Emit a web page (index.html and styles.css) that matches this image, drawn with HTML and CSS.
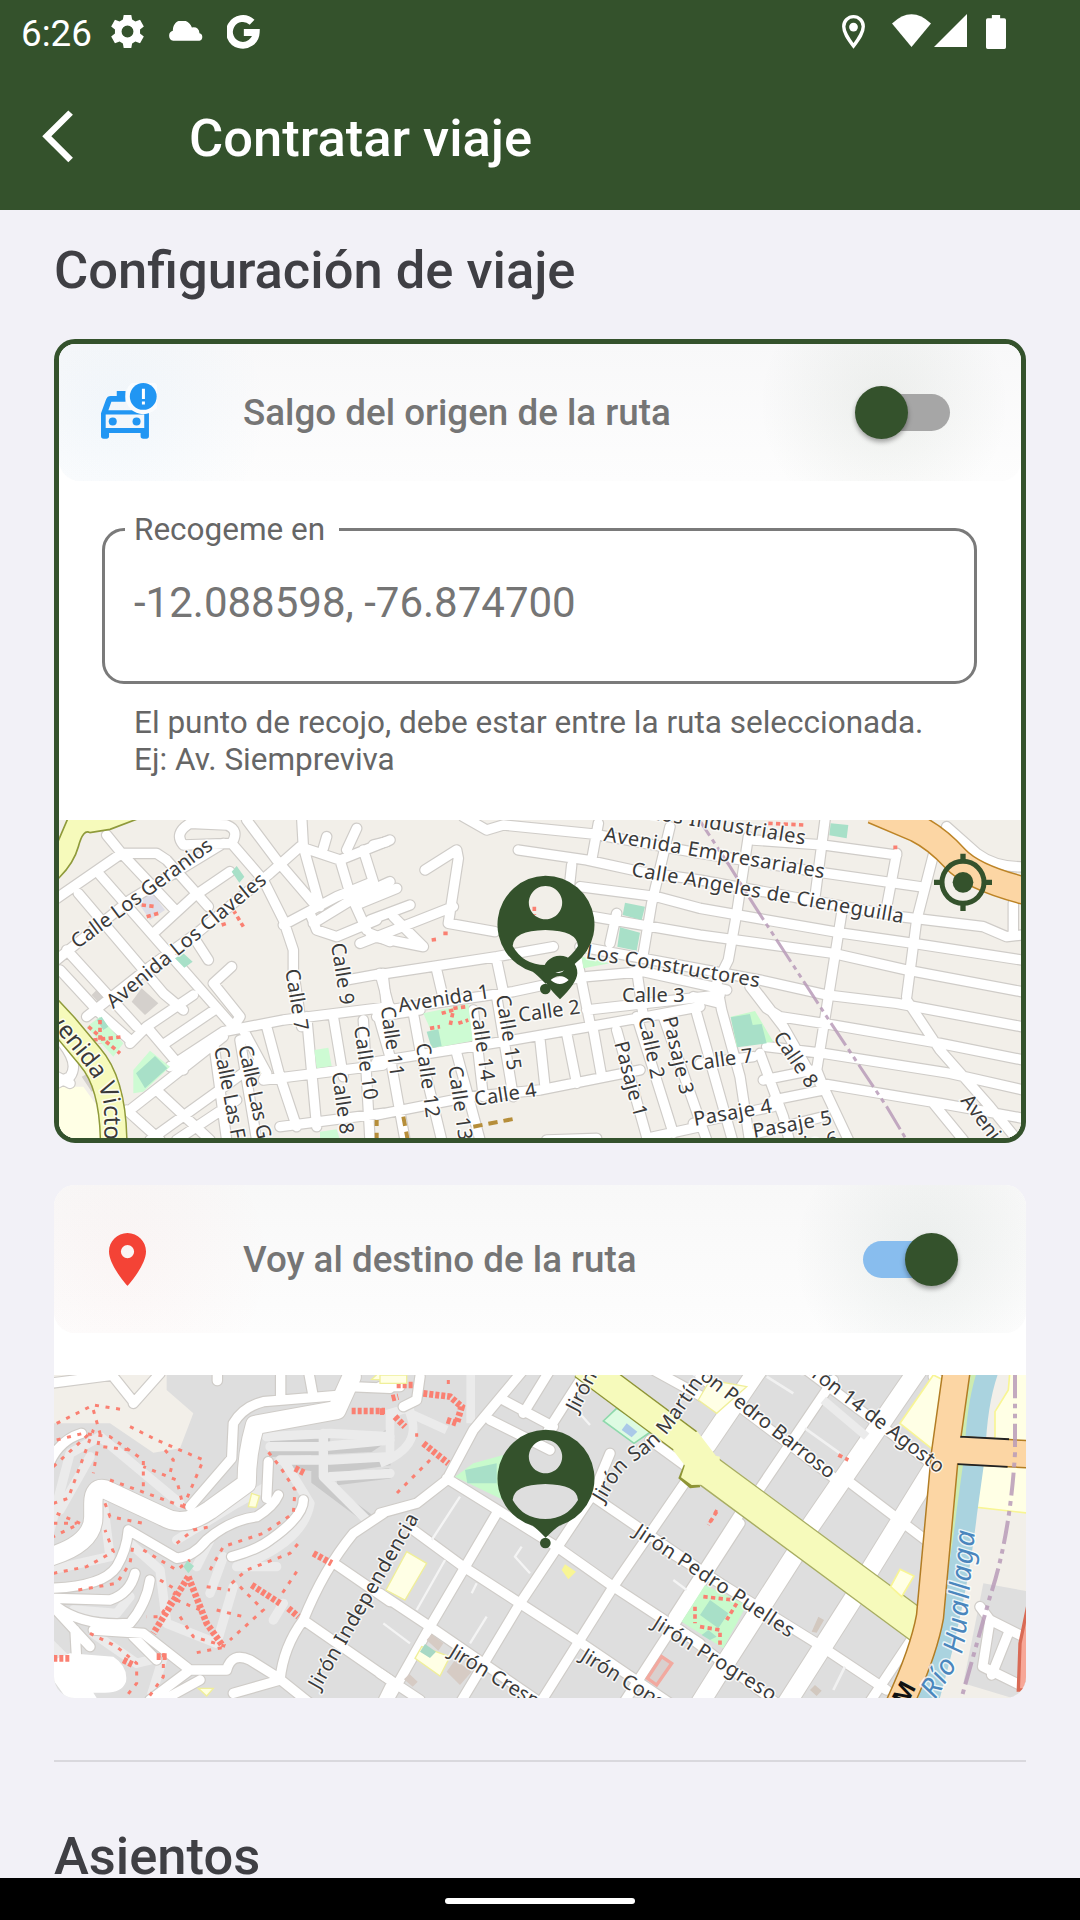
FILE: index.html
```html
<!DOCTYPE html>
<html lang="es">
<head>
<meta charset="utf-8">
<title>Contratar viaje</title>
<link rel="stylesheet" href="styles.css">
</head>
<body>
<div class="screen">
  <header class="top">
    <div class="status">
      <div class="status-left">
        <span class="clock">6:26</span>
        <svg class="gear" viewBox="2 2 20 20"><path fill-rule="evenodd" d="M19.600 13.200V10.800L21.900 8.900 19.600 4.900 16.800 6 14.800 4.800 14.300 2H9.700L9.200 4.800 7.200 6 4.400 4.900 2.100 8.900 4.400 10.800V13.200L2.100 15.100 4.400 19.100 7.200 18 9.200 19.200 9.700 22H14.300L14.800 19.200 16.800 18 19.600 19.100 21.900 15.100zM12 15.600A3.600 3.600 0 1 1 12 8.400a3.600 3.600 0 0 1 0 7.200z"/></svg>
        <svg class="cloud" viewBox="485 62 104 59" preserveAspectRatio="none"><path d="M500 120a15 15 0 0 1-1-29C499 52 544 51 554 81q20-3 22 17a11.500 11.500 0 0 1 0 22z"/></svg>
        <svg class="glogo" viewBox="657 45 96 99"><path fill="none" stroke="#fff" stroke-width="20" d="M730 66A39 39 0 1 0 742 96H706"/></svg>
      </div>
      <div class="status-right">
        <svg class="loc" viewBox="876 43 68 101"><path fill="none" stroke="#fff" stroke-width="10" d="M910 135C893 112 881 95 881 77a29 29 0 0 1 58 0C939 95 927 112 910 135z"/><circle cx="910" cy="79" r="13"/></svg>
        <svg class="wifi" viewBox="1021 42 114 98" preserveAspectRatio="none"><path d="M1078 140 1021 70Q1078 15 1135 70z"/></svg>
        <svg class="signal" viewBox="0 0 31 33" preserveAspectRatio="none"><path d="M31 0V33H0z"/></svg>
        <svg class="battery" viewBox="1295 42 58 102" preserveAspectRatio="none"><path d="M1312 42h24v10h12q5 0 5 5v82q0 5-5 5h-48q-5 0-5-5V57q0-5 5-5h12z"/></svg>
      </div>
    </div>
    <div class="appbar">
      <svg class="back" viewBox="120 330 94 160" preserveAspectRatio="none"><path fill="none" stroke="#fff" stroke-width="19" d="M204 338 134 409 204 481"/></svg>
      <h1>Contratar viaje</h1>
    </div>
  </header>

  <main>
    <h2>Configuración de viaje</h2>

    <section class="card card-origin">
      <div class="row row-origin">
        <div class="row-icon">
          <svg class="car" viewBox="184 160 167 167">
            <path fill="#2196f3" fill-rule="evenodd" d="M184 250 199 209Q203 199 213 199H231V184H257V216H215L206 241H327V318Q327 326 319 326H310Q302 326 302 318V309H208V318Q208 326 200 326H192Q184 326 184 318ZM198 254V294H313V254Z"/>
            <circle cx="219" cy="275" r="12" fill="#2196f3"/><circle cx="290" cy="275" r="12" fill="#2196f3"/>
            <circle cx="310" cy="200" r="53" fill="#fafcfe"/><circle cx="310" cy="200" r="40" fill="#2196f3"/>
            <path fill="#fff" d="M306 177h9v31h-9zM306 215h9v9h-9z"/>
          </svg>
        </div>
        <span class="row-title">Salgo del origen de la ruta</span>
        <div class="switch"><i class="thumb"></i></div>
      </div>
      <fieldset class="field">
        <legend>Recogeme en</legend>
        <div class="value">-12.088598, -76.874700</div>
      </fieldset>
      <p class="helper">El punto de recojo, debe estar entre la ruta seleccionada.<br>Ej: Av. Siempreviva</p>
      <svg class="map" viewBox="59 820 962 318" preserveAspectRatio="none">
        <defs>
          <g id="originRoads">
            <path transform="translate(50 810) scale(.33333)" d="M20 265 215 130M170 75 215 130H320L350 150 475 290M215 130 375 300M150 195 330 400 550 650M85 250 340 550 400 600M50 420 260 650M30 480 150 610 240 690M20 450 240 270 520 100M310 370 430 260 540 185M110 620 300 470 440 370 660 190 750 110M240 700 290 650 430 555M345 700 500 595M360 770 520 665 700 630 1020 590M290 650 400 780M430 380 475 450M545 470 490 520 570 620 550 650M400 105Q370 70 420 40L530 45Q570 60 545 100ZM545 100 640 210 700 330 730 420V480L755 650M590 30 680 150 800 290M755 20 760 110 810 290M750 110 870 150 1020 90M830 80 820 115M920 55 890 120M700 345 860 260 970 215 940 120M870 150 900 250 950 360M790 340 920 260 1020 215M780 310 800 360 860 380 980 330M960 370 1020 395M580 660 650 790 640 810 1000 765M650 650 690 800 740 950M770 620 800 950M850 620 880 800M690 950 1000 910M1000 500 1010 590M890 510 1000 490M240 900 520 680M230 900 330 990M330 850 480 990M300 990 620 760M380 990 560 870M20 800 60 820M30 690Q90 760 60 800L20 820M490 690 530 990M570 690 620 990M940 630 960 990"/>
            <path transform="translate(380 810) scale(.33333)" d="M250 20 320 60 370 45 640 72 960 130 1340 190 1620 230M415 120 620 150 780 185 960 210 1560 320 1810 350 1880 380 1925 375M600 230 830 260 960 295 1390 370 1600 400 1925 450M640 320 960 375 1360 430 1580 480 1925 545M600 410 1140 510 1340 555 1550 580 1925 650M135 180 230 120 235 145 205 340 345 365M-20 105 20 95M-60 280 50 235M-30 330 90 285M-60 400 220 290M40 320 130 410M-20 380 130 410M-10 495 350 440 520 410M-10 605 400 545 610 500M-10 755 400 690 800 620 960 590M-10 915 270 860 480 840 780 780M0 490 30 600M170 480 190 565M350 450 370 545M590 440 630 640M100 610 120 720 185 990M-10 600 30 740 75 990M230 730 300 990M280 600 310 860M350 560 400 860M480 690 495 830M560 670 590 820M640 660 665 800M710 660 800 980M770 480 790 620M770 620 880 970M850 620 980 990M950 610 1060 1000M620 500 790 485 1040 540M620 600 1020 555M800 985 960 950M655 40 635 150M575 165 565 260M870 50 815 280 790 430M710 310 690 400M-10 620 120 600M500 990 650 985"/>
            <path transform="translate(700 810) scale(.33333)" d="M160 90 370 105 590 135M145 80 110 310 85 450 50 520 65 600 120 800 150 1000M375 30 345 260M425 310 390 530 350 780 370 830 450 1000M590 130 560 290M700 135 650 330 620 560M620 570 720 720 870 890 960 1000M150 520 250 650 330 790M150 530 200 595 240 620 370 640 720 700 970 750M200 710 370 730 750 790 970 840M360 820 720 880 970 925M700 880 790 990M940 280V370M-20 560 60 580M180 730 250 920 270 1000M0 760 160 740M190 810 340 780M220 870 370 840M-20 940 220 890M150 975 370 920M740 50 830 130Q890 175 980 170"/>
          </g>
        </defs>
        <rect x="59" y="820" width="962" height="318" fill="#f2efe9"/>
        <g transform="translate(50 810) scale(.33333)">
          <path fill="#ffffe5" d="M20 830 100 830 150 900 150 990H20z"/>
          <path fill="#dedee8" d="M255 265 300 240 345 300 300 330z"/>
          <path fill="#d4d0cc" d="M245 575 275 535 325 580 285 615zM95 800 115 790 150 830 125 845zM125 555 145 535 165 560 148 580z"/>
        </g>
        <use href="#originRoads" class="casing"/>
        <use href="#originRoads" class="road"/>
        <g transform="translate(50 810) scale(.33333)">
          <path fill="#cdfbd3" d="M110 650 150 620 220 700 190 740zM250 850V780L300 722 360 770 280 845zM793 720 835 713 845 768 800 775zM810 965 860 958 870 990H810z"/>
          <path fill="#a8e0c8" d="M545 185 560 168 583 200 568 218zM375 445 400 430 428 455 403 473zM258 790 315 738 352 775 285 835zM140 630 155 620 175 650 160 660z"/>
          <path class="reds" d="M275 285 320 290M290 320 325 310M550 300 580 350M515 345 530 340M115 650 210 730M150 630V700M130 690 220 680"/>
          <path fill="#f6fabb" stroke="#8f9a3a" stroke-width="5" d="M15 215Q70 165 85 110T120 68L180 58 275 22H55L15 115z"/>
          <path class="yellowcase" stroke-width="84" d="M-30 570 45 650 120 740Q190 820 191 1000"/>
          <path class="yellow" stroke-width="75" d="M-30 570 45 650 120 740Q190 820 191 1000"/>
          <path fill="none" stroke="#b68e3a" stroke-width="12" stroke-dasharray="18 20" d="M980 930V1000"/>
        </g>
        <g transform="translate(380 810) scale(.33333)">
          <path fill="#cdfbd3" d="M130 610 265 582 278 692 175 712z"/>
          <path fill="#c8facc" d="M605 440 690 460 610 475z"/>
          <path fill="#a8e0c8" d="M735 278 795 290 785 330 728 315zM720 352 780 368 770 422 712 410zM140 665 175 658 185 708 155 715z"/>
          <path class="reds" d="M150 655 180 650M185 610 220 600 210 650M220 595 260 590M235 640 265 630M155 390 170 388M190 370H205M463 290V315"/>
          <path fill="none" stroke="#b68e3a" stroke-width="12" stroke-dasharray="28 18" d="M70 920 85 1000M280 950 410 925"/>
        </g>
        <g transform="translate(700 810) scale(.33333)">
          <path fill="#c8facc" d="M92 620 165 603 220 695 110 710z"/>
          <path fill="#a8e0c8" d="M92 622 150 612 158 645 185 642 200 700 112 712zM392 40 445 45 440 85 388 76z"/>
          <path class="reds" d="M205 40 310 45M580 112H592"/>
          <path fill="none" stroke="#bd8426" stroke-width="86" d="M520 0 650 55Q710 85 765 145T990 246"/>
          <path fill="none" stroke="#fcd6a4" stroke-width="77" d="M520 0 650 55Q710 85 765 145T990 246"/>
          <path fill="none" stroke="#b89bb8" stroke-width="9" stroke-dasharray="80 14 14 14 14 14" opacity=".85" d="M-15 10 90 170 165 290 380 620 560 890 620 990"/>
        </g>
        <g class="labels">
          <g transform="translate(50 810) scale(.33333)">
            <text transform="translate(82 418) rotate(-36.5)" textLength="510">Calle Los Geranios</text>
            <text transform="translate(190 598) rotate(-39.500)" textLength="600">Avenida Los Claveles</text>
            <text transform="translate(706 480) rotate(81)" textLength="187">Calle 7</text>
            <text transform="translate(843 402) rotate(81)" textLength="187">Calle 9</text>
            <text transform="translate(912 650) rotate(82)" textLength="224">Calle 10</text>
            <text transform="translate(845 788) rotate(82)" textLength="188">Calle 8</text>
            <text transform="translate(492 714) rotate(79)" textLength="280">Calle Las F</text>
            <text transform="translate(565 710) rotate(78)" textLength="286">Calle Las G</text>
            <path id="victoria" fill="none" d="M-60 590 25 668 100 760Q155 830 162 890L168 1200"/>
            <text class="big"><textPath href="#victoria" startOffset="24">Avenida Victoria</textPath></text>
          </g>
          <g transform="translate(380 810) scale(.33333)">
            <text transform="translate(2 592) rotate(82)" textLength="212">Calle 11</text>
            <text transform="translate(108 702) rotate(82)" textLength="225">Calle 12</text>
            <text transform="translate(205 770) rotate(82)" textLength="225">Calle 13</text>
            <text transform="translate(272 592) rotate(82)" textLength="225">Calle 14</text>
            <text transform="translate(348 558) rotate(81)" textLength="228">Calle 15</text>
            <text transform="translate(58 607) rotate(-9)" textLength="276">Avenida 1</text>
            <text transform="translate(418 636) rotate(-8)" textLength="186">Calle 2</text>
            <text transform="translate(726 577)" textLength="188">Calle 3</text>
            <text transform="translate(286 888) rotate(-9)" textLength="188">Calle 4</text>
            <text transform="translate(935 782) rotate(-8)" textLength="188">Calle 7</text>
            <text transform="translate(775 625) rotate(78)" textLength="188">Calle 2</text>
            <text transform="translate(848 624) rotate(77)" textLength="238">Pasaje 3</text>
            <text transform="translate(703 700) rotate(75)" textLength="232">Pasaje 1</text>
            <text transform="translate(944 948) rotate(-10)" textLength="238">Pasaje 4</text>
            <text transform="translate(670 92) rotate(9.700)" textLength="670">Avenida Empresariales</text>
            <text transform="translate(752 197) rotate(9.900)" textLength="828">Calle Angeles de Cieneguilla</text>
            <text transform="translate(808 26) rotate(9.500)" textLength="472">Los Industriales</text>
            <text transform="translate(616 445) rotate(9.500)" textLength="527">Los Constructores</text>
          </g>
          <g transform="translate(700 810) scale(.33333)">
            <text transform="translate(162 984) rotate(-10)" textLength="240">Pasaje 5</text>
            <text transform="translate(180 1046) rotate(-10)" textLength="240">Pasaje 6</text>
            <text transform="translate(218 682) rotate(56)" textLength="188">Calle 8</text>
            <text transform="translate(780 872) rotate(53)">Avenida</text>
          </g>
        </g>
        <g fill="#34522c">
          <g id="person" transform="translate(380 810) scale(.33333)">
            <path fill-rule="evenodd" d="M496 197A147 147 0 0 1 538 485Q525 493 497 521 470 493 458 485A147 147 0 0 1 496 197ZM496 228A50 50 0 1 0 497 228ZM398 408Q430 465 496 465 560 465 594 408 592 362 496 360 400 362 398 408Z"/>
            <circle cx="496" cy="537" r="16"/>
          </g>
          <g transform="translate(380 810) scale(.33333)">
            <path fill-rule="evenodd" d="M540 437A52 52 0 0 1 592 490Q590 520 540 568 490 520 488 490A52 52 0 0 1 540 437ZM512 510Q540 534 566 510 540 486 512 510Z"/>
            <path fill="#fff" d="M526 487Q545 486 552 481 545 493 526 487z"/>
          </g>
          <g transform="translate(700 810) scale(.33333)">
            <circle cx="789" cy="217" r="31"/>
            <circle cx="789" cy="217" r="63" fill="none" stroke="#34522c" stroke-width="15"/>
            <path d="M781 131h16v23h-16zM781 280h16v23h-16zM702 209h23v16h-23zM853 209h23v16h-23z"/>
          </g>
        </g>
      </svg>
    </section>

    <section class="card card-destination">
      <div class="row row-destination">
        <div class="row-icon">
          <svg class="redpin" viewBox="5 2 14 20"><path fill="#f44336" d="M12 2C8.130 2 5 5.130 5 9c0 5.250 7 13 7 13s7-7.750 7-13c0-3.870-3.130-7-7-7zm0 9.500a2.500 2.500 0 0 1 0-5 2.500 2.500 0 0 1 0 5z"/></svg>
        </div>
        <span class="row-title">Voy al destino de la ruta</span>
        <div class="switch on"><i class="thumb"></i></div>
      </div>
      <svg class="map" viewBox="54 1375 972 323" preserveAspectRatio="none">
        <defs>
          <g id="thickRoads">
            <path transform="translate(50 1370) scale(.33333)" d="M0 560Q130 520 130 440V400Q130 350 165 358L340 440Q400 475 480 420L590 340Q590 250 615 165L860 120 905 20"/>
            <path transform="translate(700 1370) scale(.33333)" d="M20 225 180 -10M330 470 660 -10M510 600 720 260M300 530 50 920 0 1000M470 670 260 1000"/>
          </g>
          <g id="cityRoads">
            <path transform="translate(50 1370) scale(.33333)" d="M420 410 545 265 550 160Q580 110 640 95L880 75M900 50 1020 55M0 655Q160 650 200 590 230 540 235 480L380 565Q430 560 470 510 540 450 620 440 670 410 685 375M655 275 650 385M545 560Q620 540 660 510 760 440 760 390M0 685 180 690Q240 670 255 610M20 710Q100 770 240 760 290 700 300 630M0 700 120 830M130 780 280 790 420 900 530 900Q545 845 600 870L680 920 780 1000M250 800 320 870M420 900 300 990M450 930 340 990M75 780 80 870M690 930Q700 830 760 750 820 600 910 490L1000 430M760 750 1020 930M860 585 1020 695M550 970 690 930M250 100 330 10M190 20 250 95M0 40 190 15M502 0V32M692 0V80M775 0 788 70M0 275Q30 210 95 190M1000 990 1020 950"/>
            <path transform="translate(380 1370) scale(.33333)" d="M0 430 110 400 200 330 280 180 430 0M200 325 530 530 700 650 960 820M370 90 520 170M330 150 510 240M100 480 250 590 590 810 870 1000M0 670 150 770 470 990M0 910 120 990M640 380 1020 640M810 210 920 290M820 0 1020 110M20 1000 150 770 350 430M240 1000 420 700 640 370 690 250M480 1000 700 650 920 330M730 1000 1080 460M505 180 620 0M430 130 510 0M120 20 110 90 70 110M0 50H60"/>
            <path transform="translate(700 1370) scale(.33333)" d="M170 370 400 30M120 430-80 740M440 330 690 520M0 20 410 330M320 0 720 300M-100 540 350 820 560 960M-60 780 230 1000M640 800 500 1010M700 20 770 60"/>
          </g>
        </defs>
        <rect x="54" y="1375" width="972" height="323" fill="#dedede"/>
        <g transform="translate(50 1370) scale(.33333)">
          <path fill="#f2efe9" d="M0 0H350V60L430 130 390 235 310 248 180 160 0 160z"/>
          <path fill="none" stroke="#c9c9c9" stroke-width="32" d="M660 210 840 220M660 245 960 230 1020 190M700 275 840 295 1020 270M800 180V330L960 450M1020 310 860 330"/>
          <path fill="none" stroke="#ebebeb" stroke-width="28" stroke-linejoin="round" stroke-linecap="round" d="M650 200 840 190 1020 200M660 230H820L1020 210M690 270H840L1020 260M820 190V320L950 450M840 320 1020 310M700 270 780 400Q760 520 560 590M560 590H680M520 560 480 670M700 700 670 750M0 480 60 250 150 200 270 300 390 400M30 420 120 260M160 400 180 560 0 600M240 520 330 600 350 760 500 820 550 650M380 510 560 400 650 350M480 510 440 590M70 720 200 730 240 680M130 790 260 880 340 860 300 990M0 820 60 880"/>
        </g>
        <path transform="translate(380 1370) scale(.33333)" fill="none" stroke="#ebebeb" stroke-width="26" d="M0 280Q130 230 90 130L200 180M272 0V160M30 250V130L100 110"/>
        <use href="#thickRoads" class="casing thick"/>
        <use href="#cityRoads" class="casing"/>
        <use href="#thickRoads" class="road thick"/>
        <use href="#cityRoads" class="road"/>
        <g transform="translate(50 1370) scale(.33333)">
          <path fill="#fff" d="M60 850 190 860Q235 890 228 935 215 970 160 968H130L150 1000H60L10 930V870z"/>
          <path class="reds sparse" d="M20 160 130 105 225 120M240 170 320 210 460 270 400 410M130 120 150 190 130 310M20 210 100 190 180 200 280 270 280 350M10 290 130 180 60 370M10 400 70 380M20 430 90 460 10 500M180 330 400 410 380 330 280 290M160 230 240 240M345 240 370 270 360 310M165 400 180 440 280 460M10 610 110 590 190 545 165 480M85 660 200 640 240 580 250 520M280 540 380 600 420 570M330 630 380 660 330 740 290 740M380 520 430 480 480 470M480 600 520 530 640 490 730 430 735 360 690 290 650 240M545 640 590 600 720 550 745 520M570 650 640 720 540 810M500 720 580 740M740 605 690 680M390 740 430 800 530 830 430 850M120 790 200 830 260 880 260 940 220 990M340 850 340 920 290 990M10 460H80M380 690 450 720M470 650 540 660"/>
          <path class="reds dense" d="M415 620 310 790M415 620 470 760 520 830M605 645 690 700M715 715 745 740M790 550 845 580M735 295 765 310M905 123H1005M10 865H60M220 870 250 885M320 860H355"/>
          <path fill="#a8e0c8" d="M400 590 412 572 432 588 415 610z"/>
          <path fill="#ffffe0" stroke="#f0ef99" stroke-width="4" d="M595 410 605 370 628 378 618 412zM445 955 490 955 470 978zM965 28 990 5H1025V30z"/>
        </g>
        <g transform="translate(380 1370) scale(.33333)">
          <path class="reds dense" d="M50 45H100M130 70 210 80 245 110 230 160 200 150M45 140 75 170M130 220 205 280M0 125H12M35 85 55 80"/>
          <path class="reds sparse" d="M205 30V60M110 190V200M150 270 50 370M1010 420 985 465"/>
          <path fill="none" stroke="#f4f4f4" stroke-width="7" d="M240 380 155 510M195 570 110 720M10 760 90 820M425 530 405 560 450 610M320 740 270 820M290 640 275 670M590 120 630 165M880 630 920 660"/>
          <path fill="#c8facc" d="M225 320 280 280 370 255V390z"/>
          <path fill="#a8e0c8" d="M255 300 350 280 350 340 262 340z"/>
          <path fill="#ddfbe2" stroke="#8ed9ac" stroke-width="5" d="M670 153 710 115 820 180 762 220z"/>
          <path fill="#aac9e8" d="M725 180 740 160 772 185 755 202z"/>
          <path fill="#ffffe5" stroke="#f0ef99" stroke-width="4" d="M80 545 140 580 75 690 18 660zM105 865 125 830 210 860 180 918zM955 90 990 30 1100 50 1010 130zM0 15H80V40H0z"/>
          <path fill="#f8f594" d="M545 600 555 583 588 605 565 628z"/>
          <path fill="#a8d8c5" d="M120 845 135 822 168 845 150 864z"/>
          <path fill="#d6cbc4" d="M140 810 155 792 190 820 175 842zM200 905 225 870 275 905 240 945zM72 928 88 912 113 935 98 950z"/>
          <path fill="#d9d0ce" stroke="#f2a99f" stroke-width="10" d="M845 860 875 880 830 945 802 925z"/>
          <path fill="#c8facc" d="M905 755 975 645 1100 705 1030 835z"/>
          <path fill="#a8e0c8" d="M960 735 990 690 1045 730 1015 775zM965 795 985 780 1010 800 990 810z"/>
          <path class="reds" d="M970 680 1060 690M945 710V760M960 770 1020 780 1020 830M1070 700 1040 750"/>
          <path fill="none" stroke="#8e9435" stroke-width="90" d="M610 -15 925 220"/>
          <path fill="#8e9435" d="M925 250 895 325 930 355 960 352 960 280z"/>
          <path fill="none" stroke="#a8ad62" stroke-width="100" d="M960 285 1640 787"/>
          <path fill="none" stroke="#f6fabb" stroke-width="82" d="M610 -15 925 220"/>
          <path fill="none" stroke="#f6fabb" stroke-width="92" stroke-linejoin="round" d="M915 212 985 303 1640 787"/>
          <path fill="#f6fabb" d="M930 240 903 322 935 345 1010 343 1020 260z"/>
        </g>
        <g transform="translate(700 1370) scale(.33333)">
          <path fill="#f2efe9" d="M860 0H990V1000H680L760 600z"/>
          <path fill="#dedede" d="M850 640 990 665V1000L790 940z"/>
          <path fill="#ffffe5" stroke="#f8f594" stroke-width="5" d="M930 0H990V430L830 412 845 290 885 200V125L925 60zM600 160 700 15 730 30 700 240zM600 598 642 618 605 680 572 650z"/>
          <path class="casing" stroke-width="34" d="M840 710 870 750 848 890 970 950M870 750 960 795M925 790 875 915"/>
          <path class="road" stroke-width="30" d="M840 710 870 750 848 890 970 950M870 750 960 795M925 790 875 915"/>
          <path fill="#f7a797" stroke="#d96a55" stroke-width="10" d="M985 700 960 820 955 960 990 960z"/>
          <path fill="#cdebb0" d="M800 0H840L790 440 740 700 710 800z"/>
          <path fill="none" stroke="#aad3df" stroke-width="62" d="M865 0Q830 100 825 250L800 430Q770 700 680 1010"/>
          <path fill="none" stroke="#b27d24" stroke-width="86" d="M770 0 735 250 690 740Q670 850 595 1010M735 239 990 253"/>
          <path fill="none" stroke="#222" stroke-width="88" d="M775 241 925 249"/>
          <path fill="none" stroke="#fcd6a4" stroke-width="77" d="M770 0 735 250 690 740Q670 850 595 1010M735 239 990 253"/>
          <path fill="none" stroke="#b89bb8" stroke-width="12" stroke-dasharray="70 16 14 16 14 16" opacity=".85" d="M945 15V250Q930 500 870 680L780 1000"/>
          <path fill="#d2c8bf" d="M335 785 355 740 372 750 350 788zM330 960 345 945 365 962 350 978z"/>
          <path fill="none" stroke="#f1f1f1" stroke-width="8" d="M315 175 420 250M200 20 280 70M400 960 435 890"/>
          <path fill="none" stroke="#ebebeb" stroke-width="25" d="M370 90 500 200"/>
          <path class="reds" d="M415 255 445 270M50 425 25 465"/>
        </g>
        <g class="labels">
          <g transform="translate(50 1370) scale(.33333)">
            <text transform="translate(808 962) rotate(-60)" textLength="598">Jirón Independencia</text>
          </g>
          <g transform="translate(380 1370) scale(.33333)">
            <text transform="translate(592 130) rotate(-62)">Jirón</text>
            <path id="martin" fill="none" d="M670 400 715 325Q735 290 790 258 850 215 900 140L1010-20"/>
            <text><textPath href="#martin" textLength="475">Jirón San Martín</textPath></text>
            <text transform="translate(758 494) rotate(33.500)" textLength="562">Jirón Pedro Puelles</text>
            <text transform="translate(814 770) rotate(32)" textLength="424">Jirón Progreso</text>
            <text transform="translate(204 856) rotate(31.500)">Jirón Crespo Castillo</text>
            <text transform="translate(598 868) rotate(32)">Jirón Constitución</text>
          </g>
          <g transform="translate(700 1370) scale(.33333)">
            <text transform="translate(386 328) rotate(38)" text-anchor="end">Jirón Pedro Barroso</text>
            <text transform="translate(714 312) rotate(37.500)" text-anchor="end">Jirón 14 de Agosto</text>
            <path id="river" fill="none" d="M706 990 765 895Q792 850 798 785L832 400"/>
            <text class="water"><textPath href="#river" textLength="530">Río Huallaga</textPath></text>
            <text class="bridge" transform="translate(618 1010) rotate(-62)">M</text>
          </g>
        </g>
        <use href="#person" fill="#34522c" transform="translate(0 554)"/>
      </svg>
    </section>

    <hr>
    <h2 class="seats">Asientos</h2>
  </main>
  <footer class="navbar"><i class="handle"></i></footer>
</div>
</body>
</html>
```
FILE: styles.css
```css
* { box-sizing: border-box; }

body {
  margin: 0;
  font-family: Roboto, "Noto Sans", sans-serif;
  background: #f2f1f7;
}

svg { display: block; }

.screen {
  width: 1080px;
  height: 1920px;
  display: flex;
  flex-direction: column;
  overflow: hidden;
  background: #f2f1f7;
}

.top {
  flex: none;
  height: 210px;
  background: #34522c;
  color: #fff;
}

.status {
  height: 63px;
  padding: 0 74px 0 21px;
  display: flex;
  justify-content: space-between;
}

.status svg { fill: #fff; flex: none; }
.status-left, .status-right { display: flex; align-items: center; }
.clock { width: 90px; font-size: 36.750px; line-height: 42px; padding-top: 4px; }
.gear { width: 33px; height: 33px; }
.cloud { width: 36px; height: 20px; margin: 0 23px 1px 24px; }
.glogo { width: 33px; height: 34px; }
.loc { width: 23px; height: 34px; }
.wifi { width: 39px; height: 33px; margin: 0 3px 2px 27px; }
.signal { width: 33px; height: 33px; margin-bottom: 2px; }
.battery { width: 20px; height: 34px; margin-left: 19px; }

.appbar { display: flex; align-items: center; height: 147px; padding-left: 42px; }
.back { width: 32px; height: 53px; margin: 0 115px 0 0; }

h1, h2 { margin: 0; font-size: 52.500px; font-weight: 500; line-height: 60px; }
h1 { padding-top: 3px; }
h2 { color: #3f3f44; }

main {
  flex: 1;
  min-height: 0;
  overflow: hidden;
  padding: 30px 54px 0;
}

.card { background: #fff; border-radius: 21px; overflow: hidden; }
.card-origin { height: 804px; margin-top: 39px; border: 5px solid #34522c; }
.card-destination { height: 513px; margin-top: 42px; }

.row { display: flex; align-items: center; border-radius: 0 0 21px 21px; }
.row-origin {
  height: 137px;
  padding: 0 71px 0 42px;
  background:
    radial-gradient(circle 125px at 825px 60px, rgba(52, 82, 44, .07), transparent),
    radial-gradient(circle 150px at 60px 66px, rgba(33, 150, 243, .045), transparent),
    linear-gradient(#f8f8f9, #fdfdfd);
}
.row-destination {
  height: 148px;
  padding: 0 76px 0 47px;
  background:
    radial-gradient(circle 130px at 870px 70px, rgba(52, 92, 74, .08), transparent),
    radial-gradient(circle 150px at 70px 74px, rgba(244, 67, 54, .03), transparent),
    linear-gradient(#f8f8f8, #fdfdfd);
}
.row-icon { width: 142px; }
.car { width: 56px; height: 56px; margin-bottom: 4px; }
.redpin { width: 37px; height: 53px; margin-left: 8px; }
.row-title { flex: 1; padding-top: 1px; font-size: 36.750px; font-weight: 500; line-height: 44px; color: #757575; }

.switch { position: relative; width: 87px; height: 37px; border-radius: 19px; background: #a6a6a6; }
.switch.on { background: #88bdee; }
.thumb {
  position: absolute;
  left: -8px;
  top: -8px;
  width: 53px;
  height: 53px;
  border-radius: 50%;
  background: #34522c;
  box-shadow: 0 3px 5px rgba(0, 0, 0, .35);
}
.on .thumb { left: 42px; }

.field {
  width: 875px;
  height: 172px;
  margin: 31px 0 0 43px;
  padding: 0 0 0 20px;
  border: 3px solid #7a7a7a;
  border-radius: 22px;
}
legend {
  height: 35px;
  margin-left: 0;
  padding: 1px 14px 0 9px;
  font-size: 31.500px;
  line-height: 34px;
  color: #666;
}
.value { padding: 32px 0 0 9px; font-size: 42px; line-height: 48px; color: #757575; }
.helper {
  margin: 20px 0 0 75px;
  font-size: 31.500px;
  line-height: 37px;
  color: #666;
  white-space: nowrap;
  height: 116px;
}

.card-origin .map { width: 962px; height: 318px; }
.card-destination .map { width: 972px; height: 323px; margin-top: 42px; }

.road, .casing { fill: none; stroke-linejoin: round; stroke-linecap: round; }
.casing { stroke: #cfccc8; stroke-width: 35; }
.road { stroke: #fff; stroke-width: 28; }
.casing.thick { stroke-width: 61; }
.road.thick { stroke-width: 55; }
.yellow { fill: none; stroke: #f6fabb; }
.yellowcase { fill: none; stroke: #8f9a3a; }
.reds { fill: none; stroke: #fa8072; stroke-width: 11; stroke-dasharray: 13 10; }
.reds.sparse { stroke-width: 9; stroke-dasharray: 12 20; }
.reds.dense { stroke-width: 20; stroke-dasharray: 12 6; }

.labels text {
  font-family: "Noto Sans", sans-serif;
  font-size: 60px;
  fill: #3a3a3a;
  stroke: rgba(255, 255, 255, .75);
  stroke-width: 9px;
  stroke-linejoin: round;
  paint-order: stroke;
}
.labels .big { font-size: 72px; }
.labels .water { font-size: 84px; font-style: italic; fill: #4a86bd; }
.labels .bridge { font-size: 72px; font-weight: 700; fill: #111; stroke: none; }

hr { height: 2px; margin: 62px 0 0; border: 0; background: #d9d8dd; }
.seats { margin-top: 64px; }

.navbar {
  flex: none;
  height: 42px;
  background: #000;
  display: flex;
  align-items: center;
  justify-content: center;
  padding-top: 4px;
}
.handle { width: 190px; height: 6px; border-radius: 3px; background: #fff; }
```
